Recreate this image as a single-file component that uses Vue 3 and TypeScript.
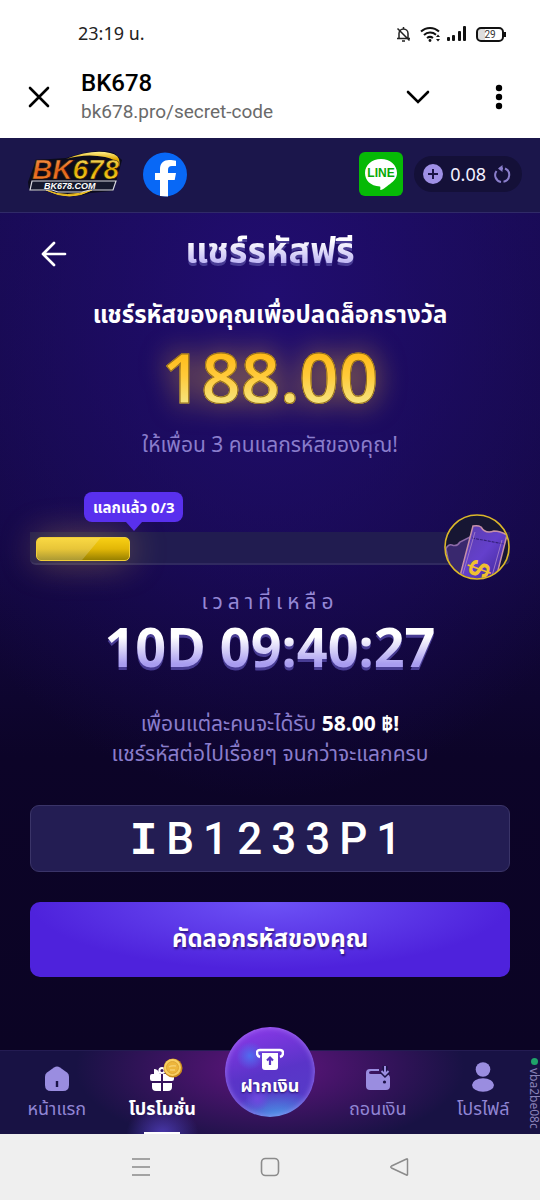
<script setup lang="ts">
import { computed, ref } from 'vue'

const balance = ref('0.08')
const reward = '188.00'
const redeemed = 0
const needed = 3
const timeLeft = '10D 09:40:27'
const code = 'IB1233P1'

const fillWidth = computed(() => `${Math.max(20, (redeemed / needed) * 100)}%`)

function copyCode(): void {
  void navigator.clipboard?.writeText(code)
}
</script>

<template>
  <div class="screen">
    <div class="status">
      <span class="clock">23:19 น.</span>
      <div class="status-icons">
        <svg width="15" height="17" viewBox="0 0 15 17" fill="none" stroke="#222" stroke-width="1.5">
          <path d="M3 12V7.5a4.5 4.5 0 0 1 9 0V12M1 12.5h13M7.5 1v2M6 15h3M1.5 2.5l12 12" />
        </svg>
        <svg width="21" height="17" viewBox="0 0 21 17" fill="none" stroke="#111" stroke-width="2">
          <path d="M1 5.5a13 13 0 0 1 18 0M4 9a9 9 0 0 1 12-.3M7 12a5 5 0 0 1 6 0" />
          <circle cx="10" cy="14.5" r="1.4" fill="#111" stroke="none" />
          <path d="M16 11l2-2.5 2 2.5zM16 13l2 2.5 2-2.5z" fill="#111" stroke="none" />
        </svg>
        <svg width="20" height="16" viewBox="0 0 20 16" fill="#111">
          <rect x="0" y="11" width="3" height="4" rx="1" />
          <rect x="5" y="9" width="3" height="6" rx="1" />
          <rect x="11" y="5" width="3" height="10" rx="1" />
          <rect x="16" y="0" width="3" height="15" rx="1" />
        </svg>
        <span class="battery">29</span>
      </div>
    </div>

    <div class="browser">
      <button class="plain" type="button" aria-label="Close">
        <svg width="22" height="22" viewBox="0 0 22 22" fill="none" stroke="#000" stroke-width="2.6" stroke-linecap="round">
          <path d="M2 2l18 18M20 2L2 20" />
        </svg>
      </button>
      <div class="site">
        <span class="site-name">BK678</span>
        <span class="site-url">bk678.pro/secret-code</span>
      </div>
      <button class="plain" type="button" aria-label="Expand">
        <svg width="24" height="14" viewBox="0 0 24 14" fill="none" stroke="#000" stroke-width="2.6" stroke-linecap="round">
          <path d="M2 2l10 10L22 2" />
        </svg>
      </button>
      <button class="plain dots" type="button" aria-label="More">
        <svg width="8" height="26" viewBox="0 0 8 26" fill="#000">
          <circle cx="4" cy="4" r="3.2" /><circle cx="4" cy="13" r="3.2" /><circle cx="4" cy="22" r="3.2" />
        </svg>
      </button>
    </div>

    <header class="top">
      <a class="brand" href="#" aria-label="BK678">
        <svg width="94" height="48" viewBox="0 0 94 48">
          <defs>
            <linearGradient id="orange" x1="0" y1="0" x2="0" y2="1">
              <stop offset="0" stop-color="#ffa050" /><stop offset=".55" stop-color="#e0641c" /><stop offset="1" stop-color="#ff8c32" />
            </linearGradient>
            <linearGradient id="gold" x1="0" y1="0" x2="0" y2="1">
              <stop offset="0" stop-color="#fff08a" /><stop offset=".5" stop-color="#e0a800" /><stop offset="1" stop-color="#ffe43c" />
            </linearGradient>
          </defs>
          <path d="M0 32L8 10 38 8Q70-3 86 3L94 10 88 32 84 41 62 43Q44 50 28 42L1 40z" fill="#0b0b1c" />
          <path d="M38 9Q64-1 82 3q12 2 9 14-2-8-14-10Q58 3 38 9z" fill="url(#gold)" />
          <path d="M18 40q20 9 46 0-22 12-46 0z" fill="#f0c020" stroke="#f0c020" />
          <text x="4" y="29" class="logo-big" fill="url(#orange)">BK<tspan fill="url(#gold)">678</tspan></text>
          <path d="M4 31h84l-3 9H62l-8 2H30l-6-2H2z" fill="#15182c" stroke="#d8d8e0" stroke-width="1.2" />
          <text x="16" y="39" class="logo-small">BK678.COM</text>
        </svg>
      </a>
      <a class="facebook" href="#" aria-label="Facebook">
        <svg width="44" height="45" viewBox="0 0 44 45">
          <circle cx="22" cy="22.5" r="22" fill="#0868f6" />
          <path d="M17 44V28h-5v-7h5v-4c0-6 4-9 9-9 3 0 5 .3 7 .7V14h-4c-3 0-4 1.500-4 4v3h8l-1.300 7H25v16.500z" fill="#fff" />
        </svg>
      </a>
      <a class="line" href="#" aria-label="LINE">
        <svg width="44" height="44" viewBox="0 0 44 44">
          <rect width="44" height="44" rx="6" fill="#06b906" />
          <path d="M22 7c9 0 16 6 16 14 0 5-3 8-7 11-4 3-8 6-9 6-1.500 0 0-2-1-3.500C11 34 6 28 6 21 6 13 13 7 22 7z" fill="#fff" />
          <text x="22" y="25" class="line-text">LINE</text>
        </svg>
      </a>
      <div class="wallet">
        <button class="plain" type="button" aria-label="Add funds">
          <svg width="20" height="20" viewBox="0 0 20 20">
            <circle cx="10" cy="10" r="10" fill="#9f90e6" />
            <path d="M10 5v10M5 10h10" stroke="#1a1446" stroke-width="2" />
          </svg>
        </button>
        <span class="balance">{{ balance }}</span>
        <button class="plain" type="button" aria-label="Refresh">
          <svg width="18" height="20" viewBox="0 0 18 20" fill="none" stroke="#8a7ecb" stroke-width="2">
            <path d="M12 4.500a7 7 0 0 1-1.500 13.300M8 18A7 7 0 0 1 3.500 7M6.500 4.500H10" />
            <path d="M9.500 1v7L5 4.500z" fill="#8a7ecb" stroke="none" />
          </svg>
        </button>
      </div>
    </header>

    <main class="main">
      <div class="title-row">
        <button class="plain back" type="button" aria-label="Back">
          <svg width="26" height="26" viewBox="0 0 26 26" fill="none" stroke="#fff" stroke-width="2.700" stroke-linecap="round" stroke-linejoin="round">
            <path d="M24 13H2M13 2L2 13l11 11" />
          </svg>
        </button>
        <h1 class="title">แชร์รหัสฟรี</h1>
      </div>

      <h2 class="subtitle">แชร์รหัสของคุณเพื่อปลดล็อกรางวัล</h2>
      <div class="amount">{{ reward }}</div>
      <p class="hint">ให้เพื่อน 3 คนแลกรหัสของคุณ!</p>

      <div class="progress">
        <div class="bubble">แลกแล้ว {{ redeemed }}/{{ needed }}</div>
        <div class="track" role="progressbar" :aria-valuenow="redeemed" aria-valuemin="0" :aria-valuemax="needed">
          <div class="fill" :style="{ width: fillWidth }"></div>
        </div>
        <svg class="prize" width="66" height="66" viewBox="0 0 66 66">
          <defs>
            <clipPath id="disc"><circle cx="33" cy="33" r="31.500" /></clipPath>
            <linearGradient id="ticket" x1="0" y1="0" x2="1" y2="1">
              <stop offset="0" stop-color="#5a3ca8" /><stop offset=".5" stop-color="#6440cc" /><stop offset="1" stop-color="#3c2390" />
            </linearGradient>
          </defs>
          <circle cx="33" cy="33" r="32" fill="#171633" />
          <g clip-path="url(#disc)">
            <path d="M2 35q2-5 6-4 5 2 8-3l12-6-3 44-16 4z" fill="#39286e" stroke="#8c6aa8" stroke-width="1.500" />
            <path d="M29 12q5-1 8 1c3 5 8 6 13 4q6 0 13 4L51 68 15 66z" fill="url(#ticket)" stroke="#c68fa8" stroke-width="1.500" />
            <path d="M28 24l32 6" stroke="#33207a" stroke-width="1.200" stroke-dasharray="3 1" />
            <path d="M58 26L48 62M31 18L19 60" stroke="#9c77c8" stroke-width="1" />
            <text x="35" y="65" class="prize-sign" transform="rotate(110 35 55)">$</text>
          </g>
          <circle cx="33" cy="33" r="32" fill="none" stroke="#dcb82a" stroke-width="1.600" />
        </svg>
      </div>

      <p class="time-label">เวลาที่เหลือ</p>
      <div class="countdown">{{ timeLeft }}</div>

      <p class="info">
        เพื่อนแต่ละคนจะได้รับ <strong>58.00 ฿!</strong><br />
        แชร์รหัสต่อไปเรื่อยๆ จนกว่าจะแลกครบ
      </p>

      <output class="code" aria-label="รหัสของคุณ"><span v-for="(ch, i) in code" :key="i" :class="{ slab: ch === 'I' }">{{ ch }}</span></output>
      <button class="copy" type="button" @click="copyCode">คัดลอกรหัสของคุณ</button>
    </main>

    <nav class="tabs">
      <a class="tab" href="#">
        <svg width="26" height="26" viewBox="0 0 26 26">
          <path d="M10 1.500q3-2 6 0l7 5q2 1.500 2 4V19q0 6-6 6H7q-6 0-6-6v-8.500q0-2.500 2-4z" fill="#9a8de0" />
          <path d="M13 15v6" stroke="#1b1448" stroke-width="2.400" />
        </svg>
        <span>หน้าแรก</span>
      </a>
      <a class="tab active" href="#">
        <svg class="gift" width="34" height="34" viewBox="0 0 34 34">
          <g fill="#fff">
            <path d="M1 18q0-2 2-2h9v7H3q-2 0-2-2zM14 16h9q2 0 2 2v3q0 2-2 2h-9zM3 25h9v8H7q-4 0-4-4zM14 25h9v4q0 4-4 4h-5z" />
            <path d="M5 11q4 0 6 5H5z" />
            <circle cx="13" cy="12.500" r="2.600" fill="none" stroke="#fff" stroke-width="2" />
          </g>
          <circle cx="24" cy="10" r="9.500" fill="#ca8b1d" />
          <circle cx="23.500" cy="9.500" r="8.500" fill="#f7cf62" />
          <circle cx="23.500" cy="9.500" r="6" fill="#edb63c" stroke="#e0a634" />
          <path d="M20 9q3-2 7-1M21 12h5" stroke="#f6cf6c" stroke-width="1.500" fill="none" />
        </svg>
        <span>โปรโมชั่น</span>
      </a>
      <a class="tab deposit" href="#">
        <span class="orb">
          <svg width="28" height="24" viewBox="0 0 28 24">
            <path d="M4 9Q1 8 1 5t3-3h20q3 0 3 3t-3 4" fill="none" stroke="#fff" stroke-width="2.400" />
            <path d="M6 5h16v14q0 3-3 3H9q-3 0-3-3z" fill="#fff" />
            <path d="M14 17v-7M11 12.500l3-3 3 3" stroke="#5b35c4" stroke-width="2.200" fill="none" />
          </svg>
          <span>ฝากเงิน</span>
        </span>
      </a>
      <a class="tab" href="#">
        <svg width="26" height="26" viewBox="0 0 26 26">
          <path d="M1 9V7q0-4 4-4h9v2H6q-2 0-2 1.500T6 8h14q5 0 5 4v8q0 4-4 4H5q-4 0-4-4z" fill="#9a8de0" />
          <path d="M20 0v8M16.500 5l3.500 3.500L23.500 5" fill="none" stroke="#1c1248" stroke-width="5" />
          <path d="M20 0v8M16.500 5l3.500 3.500L23.500 5" fill="none" stroke="#9a8de0" stroke-width="2" />
          <circle cx="19.500" cy="16" r="1.600" fill="#1c1248" />
        </svg>
        <span>ถอนเงิน</span>
      </a>
      <a class="tab" href="#">
        <svg width="24" height="30" viewBox="0 0 24 30" fill="#9a8de0">
          <circle cx="12" cy="7.500" r="7.300" />
          <ellipse cx="12" cy="23" rx="11" ry="6.800" />
        </svg>
        <span>โปรไฟล์</span>
      </a>
      <div class="version"><i></i>vba2be08c</div>
    </nav>

    <div class="system">
      <button class="plain" type="button" aria-label="Recent">
        <svg width="18" height="20" viewBox="0 0 18 20" stroke="#8b8b8b" stroke-width="1.600"><path d="M0 2h18M0 10h18M0 18h18" /></svg>
      </button>
      <button class="plain" type="button" aria-label="Home">
        <svg width="20" height="20" viewBox="0 0 20 20" fill="none" stroke="#8b8b8b" stroke-width="1.600"><rect x="1.500" y="1.500" width="17" height="17" rx="4" /></svg>
      </button>
      <button class="plain" type="button" aria-label="Back">
        <svg width="20" height="20" viewBox="0 0 20 20" fill="none" stroke="#8b8b8b" stroke-width="1.500" stroke-linejoin="round"><path d="M18.500 2.500v15q0 1-1 .5L2.500 11q-1.500-1 0-2l15-7q1-.5 1 .5z" /></svg>
      </button>
    </div>
  </div>
</template>

<style>
html, body { background: #0b0424; }
</style>

<style scoped>
* { box-sizing: border-box; }
.screen {
  min-height: 100vh;
  display: flex;
  flex-direction: column;
  overflow: hidden;
  font-family: "Noto Sans", "Noto Sans Thai", "Open Sans", sans-serif;
}
.plain {
  display: flex;
  align-items: center;
  justify-content: center;
  padding: 0;
  border: 0;
  background: none;
}
a { color: inherit; text-decoration: none; }
h1, h2, p { margin: 0; }

.status {
  display: flex;
  align-items: center;
  justify-content: space-between;
  height: 60px;
  padding: 8px 36px 0 78px;
  background: #fff;
}
.clock { font-size: 18px; color: #222; }
.status-icons { display: flex; align-items: center; gap: 9px; }
.status-icons svg:nth-child(2) { margin-right: -3px; }
.battery {
  position: relative;
  width: 28px;
  height: 15px;
  border: 2px solid #111;
  border-radius: 5px;
  background: linear-gradient(90deg, #ddd 30%, #fff 30%);
  font: 10px/11px Roboto, sans-serif;
  text-align: center;
  color: #333;
}
.battery::after {
  content: "";
  position: absolute;
  right: -4px;
  top: 3px;
  width: 2px;
  height: 5px;
  background: #111;
}

.browser {
  display: flex;
  align-items: center;
  height: 78px;
  padding: 0 37px 4px 28px;
  background: #fff;
}
.site {
  display: flex;
  flex-direction: column;
  flex: 1;
  padding-left: 31px;
  font-family: Roboto, sans-serif;
}
.site-name { font-size: 24px; line-height: 30px; font-weight: 500; color: #000; }
.site-url { font-size: 19px; line-height: 28px; color: #6a6a6a; }
.dots { margin-left: 65px; }

.top {
  display: flex;
  align-items: center;
  height: 75px;
  padding: 0 18px 2px 28px;
  background: #1b164b;
  border-bottom: 1px solid #302a68;
}
.top svg { display: block; }
.facebook { margin-left: 21px; }
.line { margin-left: auto; }
.logo-big { font: italic bold 28px "Liberation Sans", sans-serif; stroke: #241000; stroke-width: 0.6; }
.logo-small { font: italic bold 9px "Liberation Sans", sans-serif; fill: #fff; }
.line-text { font: bold 12px "Liberation Sans", sans-serif; fill: #06a906; text-anchor: middle; }
.wallet {
  display: flex;
  align-items: center;
  gap: 7px;
  height: 36px;
  margin-left: 11px;
  padding: 0 11px 0 9px;
  border-radius: 18px;
  background: #141038;
}
.balance { font-size: 18px; line-height: 36px; color: #f2f0ff; }

.main {
  flex: 1;
  display: flex;
  flex-direction: column;
  padding: 0 30px 72px;
  background:
    radial-gradient(ellipse 75% 60% at 50% 10%, #210d70 0%, rgba(33, 13, 112, 0) 100%),
    linear-gradient(#160a4c 0%, #130841 40%, #0c0428 65%, #0b0424 100%);
  text-align: center;
}
.title-row {
  display: grid;
  grid-template-columns: 48px 1fr 48px;
  align-items: center;
  height: 82px;
}
.title {
  justify-self: center;
  padding-bottom: 8px;
  font-size: 36px;
  line-height: 60px;
  font-weight: 700;
  color: transparent;
  background: linear-gradient(#fff 30%, #a89cf0 75%);
  background-clip: text;
  filter: drop-shadow(0 3px 0 #483c94);
}
.subtitle { font-size: 24px; line-height: 38px; font-weight: 700; color: #fff; }
.amount {
  align-self: center;
  padding: 0 20px;
  font-size: 69px;
  line-height: 86px;
  font-weight: 600;
  color: transparent;
  background: linear-gradient(#ffb914 20%, #ffca3a 50%, #f6e27a 80%);
  background-clip: text;
  -webkit-text-stroke: 1px #96701a;
  filter: drop-shadow(0 0 14px rgba(255, 190, 50, 0.6));
}
.hint { padding-top: 7px; font-size: 21px; line-height: 36px; color: #8a7dcc; }

.progress { position: relative; padding-top: 30px; }
.bubble {
  position: relative;
  width: max-content;
  margin-left: 54px;
  padding: 0 9px;
  border-radius: 8px;
  background: #5930ee;
  font-size: 15px;
  line-height: 30px;
  font-weight: 700;
  color: #fff;
}
.bubble::after {
  content: "";
  position: absolute;
  top: 30px;
  left: calc(50% - 8px);
  border: 8px solid transparent;
  border-top: 9px solid #5930ee;
  border-bottom: 0;
}
.track {
  height: 33px;
  margin-top: 10px;
  padding: 5px 6px;
  border-radius: 0 0 6px 6px;
  border-bottom: 2px solid #302a60;
  background: #211c50;
}
.fill {
  height: 24px;
  border: 1px solid #f0cd38;
  border-radius: 5px;
  background:
    linear-gradient(130deg, rgba(255, 255, 255, 0.2) 57%, transparent 58%),
    linear-gradient(#f8cf14, #e2b707 50%, #978000);
  box-shadow: 0 0 36px rgba(255, 200, 80, 0.4);
}
.prize { position: absolute; right: 0; bottom: -15px; }
.prize-sign { font: bold 30px "Liberation Sans", sans-serif; fill: #f0c030; text-anchor: middle; }

.time-label {
  padding-top: 21px;
  font-size: 21px;
  line-height: 30px;
  letter-spacing: 5px;
  color: #9588d6;
}
.countdown {
  align-self: center;
  font-size: 54px;
  line-height: 60px;
  font-weight: 700;
  color: transparent;
  background: linear-gradient(#fff 35%, #a89cf0 80%);
  background-clip: text;
  filter: drop-shadow(0 3px 0 #483c94);
}
.info { padding-top: 32px; font-size: 21px; line-height: 30px; color: #8a7dcc; }
.info strong { color: #fff; }
.code {
  display: block;
  margin-top: 37px;
  padding-top: 2px;
  border: 1px solid #3a3468;
  border-radius: 9px;
  background: #231d53;
  font: 500 44px/63px Roboto, sans-serif;
  letter-spacing: 9px;
  color: #fff;
}
.slab { font-family: "Liberation Mono", monospace; font-weight: 700; font-size: 46px; line-height: 1; }
.copy {
  height: 75px;
  margin-top: 30px;
  border: 0;
  border-radius: 10px;
  background: radial-gradient(ellipse 50% 90% at 50% 0, #6d52f6, #4e22dc);
  font: bold 24px "Noto Sans", "Noto Sans Thai", sans-serif;
  color: #fff;
  text-shadow: 1px 2px 2px rgba(20, 0, 60, 0.6);
}

.tabs {
  position: relative;
  display: grid;
  grid-template-columns: 1fr 1fr 110px 1fr 1fr;
  height: 84px;
  padding: 0 4px;
  background: radial-gradient(ellipse 36% 100% at 50% 20%, #60157e, #181244);
  border-top: 1px solid #241c52;
}
.tab {
  position: relative;
  display: flex;
  flex-direction: column;
  align-items: center;
  justify-content: flex-end;
  gap: 4px;
  padding-bottom: 14px;
  font-size: 18px;
  line-height: 24px;
  color: #9185d4;
}
.active {
  color: #fff;
  font-weight: 700;
  background: radial-gradient(ellipse 36px 30px at 50% 100%, #4a38ac, transparent);
}
.active::after {
  content: "";
  position: absolute;
  bottom: 0;
  width: 36px;
  height: 2px;
  background: #fff;
}
.gift { margin-left: 8px; }
.orb {
  position: absolute;
  bottom: 17px;
  display: flex;
  flex-direction: column;
  align-items: center;
  justify-content: center;
  gap: 1px;
  width: 90px;
  height: 90px;
  border-radius: 50%;
  background:
    radial-gradient(circle 14px at 28% 32%, #4f6df0, transparent),
    radial-gradient(circle 12px at 36% 80%, #7048e0, transparent),
    radial-gradient(ellipse 50px 30px at 60% 104%, #46a4ea, transparent),
    linear-gradient(165deg, #8a38e8 5%, #5a34c8 50%, #5340c8);
  box-shadow: inset 0 0 6px rgba(190, 150, 255, 0.7);
  font-size: 18px;
  font-weight: 700;
  color: #fff;
  text-shadow: 0 1px 2px #25106a;
}
.version {
  position: absolute;
  right: 0;
  top: 7px;
  display: flex;
  align-items: center;
  gap: 3px;
  writing-mode: vertical-rl;
  font-size: 12px;
  line-height: 12px;
  color: #8a82b8;
}
.version i { width: 7px; height: 7px; border-radius: 50%; background: #1fa36a; }

.system {
  display: flex;
  align-items: center;
  justify-content: space-between;
  height: 66px;
  padding: 0 131px 0 132px;
  background: #efefef;
}
</style>
